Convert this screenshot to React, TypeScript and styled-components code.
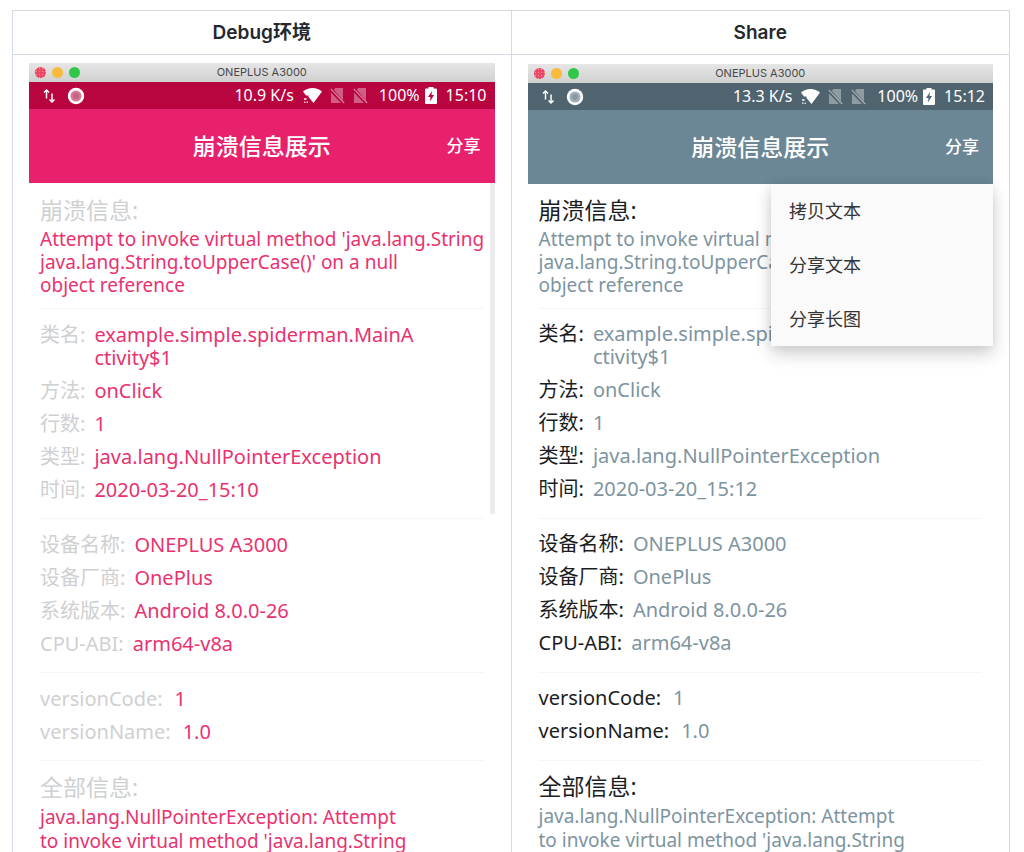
import React from "react";
import styled, { createGlobalStyle, ThemeProvider } from "styled-components";

type PhoneTheme = {
  status: string;
  header: string;
  label: string;
  value: string;
  messageTop: number;
  sectionTop: number;
  sectionEnd: number;
};

const debugTheme: PhoneTheme = {
  status: "#b8043f",
  header: "#e8216d",
  label: "#cfd0d1",
  value: "#e9326f",
  messageTop: 12,
  sectionTop: 14,
  sectionEnd: 17,
};

const shareTheme: PhoneTheme = {
  status: "#50646f",
  header: "#6b8796",
  label: "#1b1d1f",
  value: "#7d94a1",
  messageTop: 11,
  sectionTop: 13,
  sectionEnd: 18,
};

const Global = createGlobalStyle`
  * { box-sizing: border-box; }
  body {
    margin: 0;
    background: #fff;
    font-family: "Noto Sans", "Noto Sans CJK SC", sans-serif;
  }
  button { font: inherit; border: 0; background: none; padding: 0; cursor: pointer; }
`;

const Page = styled.main`
  height: 100vh;
  overflow: hidden;
  padding: 10px 14px 0 12px;
`;

const Compare = styled.table`
  width: 100%;
  table-layout: fixed;
  border-collapse: collapse;
`;

const HeadCell = styled.th`
  height: 44px;
  padding: 0;
  border: 1px solid #d3dae1;
  color: #24292e;
  font-family: Inter, "Noto Sans CJK SC", sans-serif;
  font-size: 19px;
  font-weight: 600;
  line-height: 28px;
`;

const BodyCell = styled.td<{ $top: number }>`
  padding: ${(p) => p.$top}px 16px 40px;
  border: 1px solid #d3dae1;
  vertical-align: top;
`;

const Phone = styled.section`
  position: relative;
`;

const WindowBar = styled.div`
  display: grid;
  grid-template-columns: 1fr auto 1fr;
  align-items: center;
  height: 19px;
  padding: 0 6px;
  background: linear-gradient(#e6e6e6, #d0d0d0);
  color: #47484a;
  font-family: Inter, sans-serif;
  font-size: 11px;
  line-height: 19px;
`;

const Lights = styled.div`
  display: flex;
  gap: 6px;
`;

const Light = styled.span<{ $color: string; $dotted?: boolean }>`
  width: 11px;
  height: 11px;
  border-radius: 50%;
  background-color: ${(p) => p.$color};
  background-image: ${(p) => (p.$dotted ? "radial-gradient(#f5a04a 25%, transparent 50%)" : "none")};
  background-size: 3px 3px;
`;

const StatusBar = styled.div`
  display: flex;
  align-items: center;
  height: 27px;
  padding: 0 8px 0 13px;
  background: ${(p) => p.theme.status};
  color: #fff;
  font-size: 16px;
  line-height: 27px;
  white-space: nowrap;
`;

const StatusLeft = styled.div`
  display: flex;
  align-items: center;
  gap: 11px;
  flex: 1;
`;

const StatusRight = styled.div`
  display: flex;
  align-items: center;
  gap: 8px;
`;

const Charge = styled.span`
  display: flex;
  align-items: center;
  gap: 5px;
  margin: 0 1px 0 3px;
`;

const Icon = styled.svg`
  display: block;
  flex: none;
`;

const AppBar = styled.header`
  display: grid;
  grid-template-columns: 1fr auto 1fr;
  align-items: center;
  height: 74px;
  padding: 0 14px;
  background: ${(p) => p.theme.header};
  color: #fff;
`;

const Title = styled.h2`
  grid-column: 2;
  margin: 0;
  font-size: 23px;
  font-weight: 500;
  line-height: 32px;
`;

const ShareButton = styled.button`
  justify-self: end;
  color: #fff;
  font-size: 17px;
  font-weight: 500;
  line-height: 24px;
`;

const Content = styled.div`
  position: relative;
  padding: 1px 11px 0;
`;

const Thumb = styled.div`
  position: absolute;
  top: 0;
  right: 0;
  width: 5px;
  height: 331px;
  background: #ececec;
`;

const Group = styled.section<{ $message?: boolean }>`
  padding: ${(p) =>
    p.$message
      ? `${p.theme.messageTop}px 0 11px`
      : `${p.theme.sectionTop}px 0 ${p.theme.sectionEnd}px`};

  & + & {
    border-top: 1px solid #f5f5f6;
  }
`;

const Heading = styled.h3`
  margin: 0 0 4px;
  color: ${(p) => p.theme.label};
  font-size: 23px;
  font-weight: 400;
  line-height: 28px;
`;

const Message = styled.p<{ $trace?: boolean }>`
  margin: 0;
  color: ${(p) => p.theme.value};
  font-size: 19px;
  line-height: ${(p) => (p.$trace ? 24 : 23)}px;
  white-space: pre;
`;

const Fields = styled.dl`
  display: flex;
  flex-direction: column;
  gap: 10px;
  margin: 0;
`;

const Field = styled.div<{ $wide?: boolean }>`
  display: flex;
  gap: ${(p) => (p.$wide ? 12 : 9)}px;
  font-size: 20px;
  line-height: 23px;
`;

const Label = styled.dt`
  color: ${(p) => p.theme.label};
  white-space: nowrap;
`;

const Value = styled.dd`
  margin: 0;
  color: ${(p) => p.theme.value};
  white-space: pre;
`;

const Menu = styled.div`
  position: absolute;
  top: 0;
  right: 0;
  display: flex;
  flex-direction: column;
  width: 222px;
  background: #fafafa;
  box-shadow: 0 8px 16px rgba(0, 0, 0, 0.18), 0 0 10px rgba(0, 0, 0, 0.08);
`;

const MenuItem = styled.button`
  height: 54px;
  padding: 0 18px;
  color: #333537;
  font-size: 18px;
  line-height: 26px;
  text-align: left;
`;

const Transfer = () => (
  <Icon width="14" height="16" viewBox="0 0 14 16" fill="none" stroke="#fff" strokeWidth="1.500">
    <path d="M4.500 10.500V2.500M10 5.500v8" />
    <path d="M2 4.500L4.500 2 7 4.500M7.500 11.500L10 14l2.500-2.500" />
  </Icon>
);

const Ring = () => (
  <Icon width="18" height="18" viewBox="0 0 18 18">
    <circle cx="9" cy="9" r="8.200" fill="#fff" />
    <circle cx="9" cy="9" r="5.500" fill="currentColor" />
    <circle cx="9" cy="9" r="3" fill="#000" opacity="0.12" />
  </Icon>
);

const RingTint = styled.span<{ $color: string }>`
  color: ${(p) => p.$color};
`;

const Wifi = () => (
  <Icon width="20" height="17" viewBox="0 0 20 17" fill="#fff">
    <path d="M1 4.500C6-.2 15-.2 20 4.500L11.500 16 6.500 10V8.500H4z" />
    <path d="M2 11h2.500v2H2zM2 14.500h1.500V16H2zM4.500 14.500H6V16H4.500z" opacity="0.75" />
  </Icon>
);

const NoSim = () => (
  <Icon width="15" height="17" viewBox="0 0 15 17">
    <path d="M5 1h8v12.500L4 3zM1 5.500L11 16H1z" fill="#fff" opacity="0.36" />
    <path d="M.8 1.800L14.200 16" stroke="#fff" strokeWidth="1.200" opacity="0.5" />
  </Icon>
);

const Battery = ({ bolt }: { bolt: string }) => (
  <Icon width="12" height="17" viewBox="0 0 12 17">
    <path d="M3.500 0h5v1.500H11q1 0 1 1V16q0 1-1 1H1q-1 0-1-1V2.500q0-1 1-1h2.500z" fill="#fff" />
    <path d="M7 4L3 10h2.500L5 14.500 9 8H6.500z" fill={bolt} />
  </Icon>
);

type PhoneProps = {
  theme: PhoneTheme;
  speed: string;
  clock: string;
  time: string;
  ring: string;
  scrolling?: boolean;
  menuOpen?: boolean;
};

const PhoneScreen = ({ theme, speed, clock, time, ring, scrolling, menuOpen }: PhoneProps) => {
  const groups = [
    [
      ["类名:", "example.simple.spiderman.MainA\nctivity$1"],
      ["方法:", "onClick"],
      ["行数:", "1"],
      ["类型:", "java.lang.NullPointerException"],
      ["时间:", time],
    ],
    [
      ["设备名称:", "ONEPLUS A3000"],
      ["设备厂商:", "OnePlus"],
      ["系统版本:", "Android 8.0.0-26"],
      ["CPU-ABI:", "arm64-v8a"],
    ],
    [
      ["versionCode:", "1"],
      ["versionName:", "1.0"],
    ],
  ];

  return (
    <ThemeProvider theme={theme}>
      <Phone>
        <WindowBar>
          <Lights>
            <Light $color="#ee4072" $dotted />
            <Light $color="#f8bb3b" />
            <Light $color="#2fc748" />
          </Lights>
          <span>ONEPLUS A3000</span>
        </WindowBar>
        <StatusBar>
          <StatusLeft>
            <Transfer />
            <RingTint $color={ring}>
              <Ring />
            </RingTint>
          </StatusLeft>
          <StatusRight>
            <span>{speed}</span>
            <Wifi />
            <NoSim />
            <NoSim />
            <Charge>
              <span>100%</span>
              <Battery bolt={theme.status} />
            </Charge>
            <span>{clock}</span>
          </StatusRight>
        </StatusBar>
        <AppBar>
          <Title>崩溃信息展示</Title>
          <ShareButton type="button">分享</ShareButton>
        </AppBar>
        <Content>
          <Group $message>
            <Heading>崩溃信息:</Heading>
            <Message>
              {"Attempt to invoke virtual method 'java.lang.String\njava.lang.String.toUpperCase()' on a null\nobject reference"}
            </Message>
          </Group>
          {groups.map((fields, i) => (
            <Group key={i}>
              <Fields>
                {fields.map(([label, value]) => (
                  <Field key={label} $wide={i === 2}>
                    <Label>{label}</Label>
                    <Value>{value}</Value>
                  </Field>
                ))}
              </Fields>
            </Group>
          ))}
          <Group $message>
            <Heading>全部信息:</Heading>
            <Message $trace>
              {"java.lang.NullPointerException: Attempt\nto invoke virtual method 'java.lang.String"}
            </Message>
          </Group>
          {scrolling && <Thumb />}
          {menuOpen && (
            <Menu>
              <MenuItem type="button">拷贝文本</MenuItem>
              <MenuItem type="button">分享文本</MenuItem>
              <MenuItem type="button">分享长图</MenuItem>
            </Menu>
          )}
        </Content>
      </Phone>
    </ThemeProvider>
  );
};

export default function App() {
  return (
    <Page>
      <Global />
      <Compare>
        <thead>
          <tr>
            <HeadCell scope="col">Debug环境</HeadCell>
            <HeadCell scope="col">Share</HeadCell>
          </tr>
        </thead>
        <tbody>
          <tr>
            <BodyCell $top={8}>
              <PhoneScreen
                theme={debugTheme}
                speed="10.9 K/s"
                clock="15:10"
                time="2020-03-20_15:10"
                ring="#dc7497"
                scrolling
              />
            </BodyCell>
            <BodyCell $top={9}>
              <PhoneScreen
                theme={shareTheme}
                speed="13.3 K/s"
                clock="15:12"
                time="2020-03-20_15:12"
                ring="#9cafba"
                menuOpen
              />
            </BodyCell>
          </tr>
        </tbody>
      </Compare>
    </Page>
  );
}
